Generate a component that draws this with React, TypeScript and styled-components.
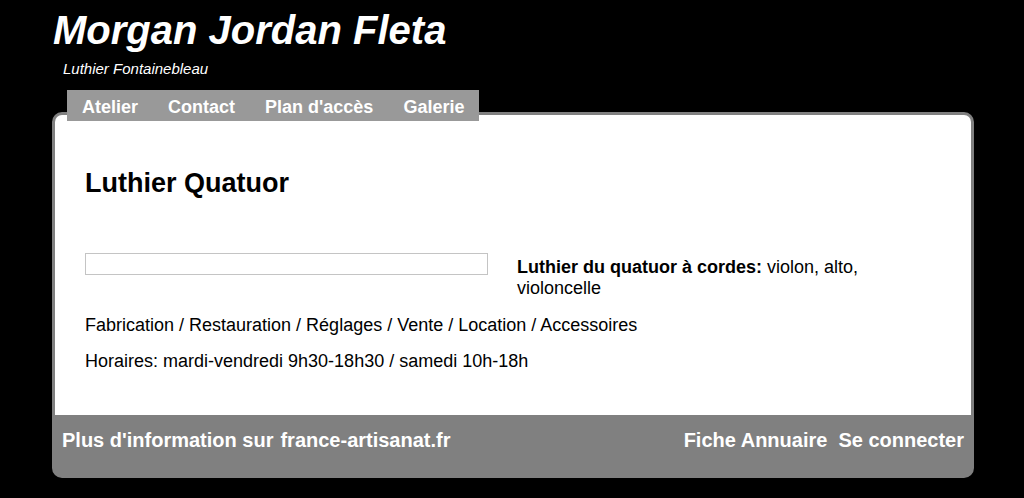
import React from "react";
import styled, { createGlobalStyle } from "styled-components";

const Global = createGlobalStyle`
  html, body { margin: 0; padding: 0; background: #000; }
  body { font-family: "Liberation Sans", Arial, sans-serif; }
  * { box-sizing: border-box; }
`;

const Page = styled.div`
  padding: 7px 0 0 52px;
  width: 1024px;
  height: 498px;
  background: #000;
`;

const Title = styled.h1`
  margin: 0 0 0 1px;
  font-size: 40px;
  line-height: 46px;
  font-weight: bold;
  font-style: italic;
  color: #fff;
`;

const Subtitle = styled.div`
  margin: 7px 0 0 11px;
  font-size: 15px;
  line-height: 17px;
  font-style: italic;
  color: #fff;
`;

const Nav = styled.nav`
  position: relative;
  z-index: 2;
  display: flex;
  width: max-content;
  margin: 13px 0 -9px 15px;
  background: #999999;
`;

const NavItem = styled.a`
  display: block;
  padding: 7px 15px 3px 15px;
  font-size: 18px;
  line-height: 21px;
  font-weight: bold;
  color: #fff;
  text-decoration: none;
`;

const Card = styled.div`
  width: 922px;
  border: 3px solid #808080;
  border-radius: 10px;
  background: #808080;
  overflow: hidden;
`;

const Content = styled.div`
  background: #fff;
  padding: 53px 30px 43px 30px;
  color: #000;
`;

const Heading = styled.h2`
  margin: 0;
  font-size: 27px;
  line-height: 31px;
  font-weight: bold;
`;

const Row = styled.div`
  display: grid;
  grid-template-columns: 403px 1fr;
  column-gap: 29px;
  margin-top: 54px;
  padding-right: 80px;
`;

const Frame = styled.div`
  height: 22px;
  border: 1px solid #c4c4c4;
  background: #fff;
`;

const Text = styled.p<{ $top?: number }>`
  margin: ${(p) => p.$top ?? 15}px 0 0 0;
  font-size: 18px;
  line-height: 21px;
`;

const Label = styled.strong`
  font-weight: bold;
`;

const Value = styled.span`
  font-weight: normal;
`;

const Footer = styled.div`
  display: flex;
  justify-content: space-between;
  align-items: flex-start;
  height: 60px;
  padding: 14px 7px 0 7px;
`;

const FooterGroup = styled.div<{ $gap: number }>`
  display: flex;
  gap: ${(p) => p.$gap}px;
`;

const FooterLink = styled.a`
  font-size: 20px;
  line-height: 23px;
  font-weight: bold;
  color: #fff;
  text-decoration: none;
  white-space: nowrap;
`;

export default function App() {
  return (
    <>
      <Global />
      <Page>
        <Title>Morgan Jordan Fleta</Title>
        <Subtitle>Luthier Fontainebleau</Subtitle>
        <Nav>
          <NavItem>Atelier</NavItem>
          <NavItem>Contact</NavItem>
          <NavItem>Plan d'accès</NavItem>
          <NavItem>Galerie</NavItem>
        </Nav>
        <Card>
          <Content>
            <Heading>Luthier Quatuor</Heading>
            <Row>
              <Frame />
              <Text $top={4}>
                <Label>Luthier du quatuor à cordes:</Label>
                <Value> violon, alto, violoncelle</Value>
              </Text>
            </Row>
            <Text $top={16}>
              Fabrication / Restauration / Réglages / Vente / Location / Accessoires
            </Text>
            <Text>Horaires: mardi-vendredi 9h30-18h30 / samedi 10h-18h</Text>
          </Content>
          <Footer>
            <FooterGroup $gap={7}>
              <FooterLink>Plus d'information sur</FooterLink>
              <FooterLink>france-artisanat.fr</FooterLink>
            </FooterGroup>
            <FooterGroup $gap={11}>
              <FooterLink>Fiche Annuaire</FooterLink>
              <FooterLink>Se connecter</FooterLink>
            </FooterGroup>
          </Footer>
        </Card>
      </Page>
    </>
  );
}
